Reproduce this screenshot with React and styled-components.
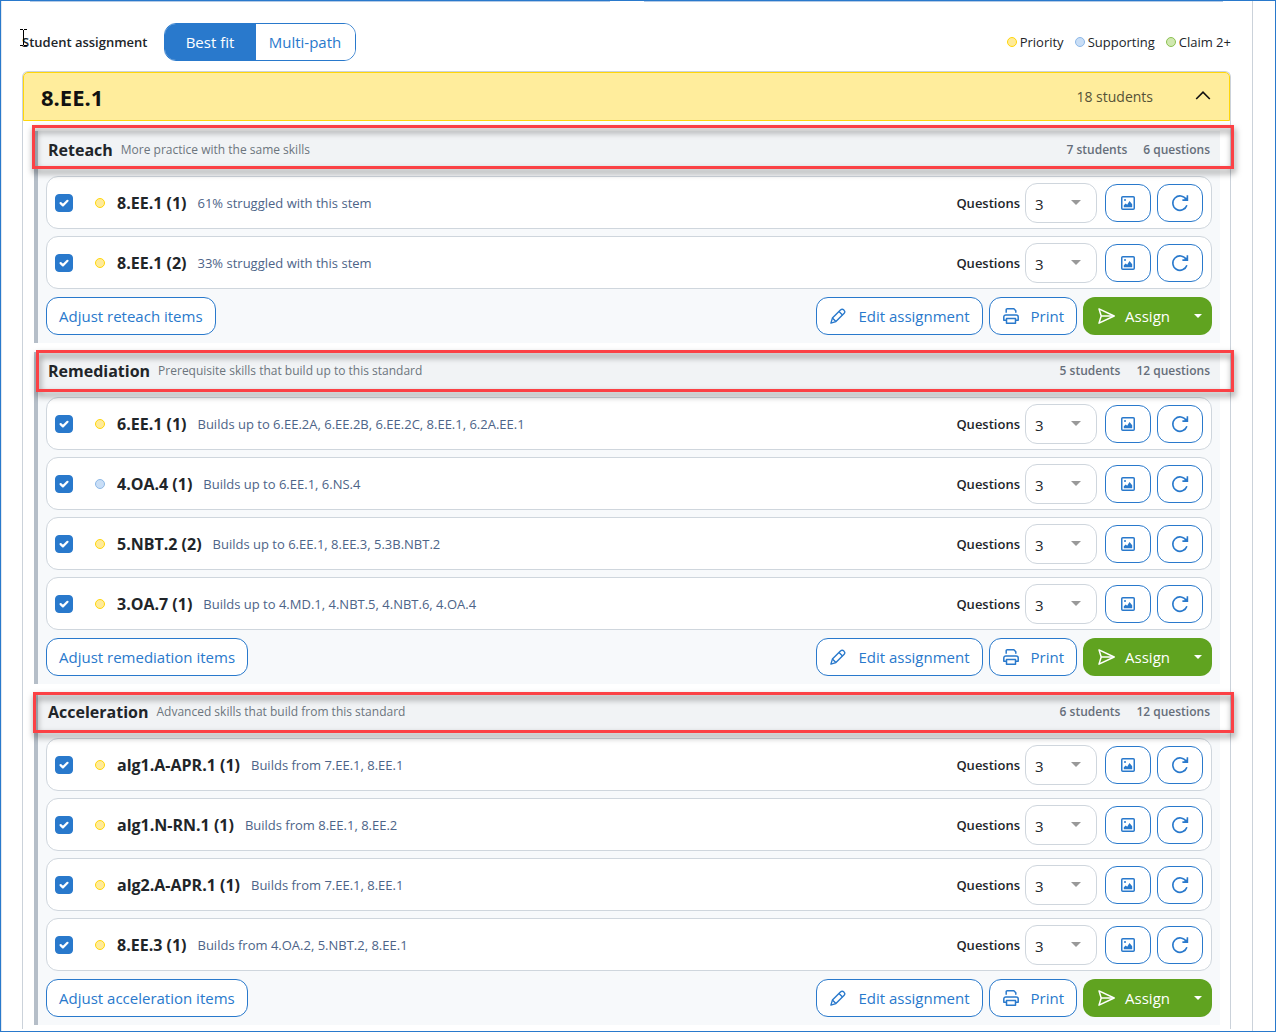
import React from 'react';
import styled, { createGlobalStyle } from 'styled-components';

const GlobalStyle = createGlobalStyle`
  *, *::before, *::after {
    box-sizing: border-box;
  }

  body {
    margin: 0;
    background: #ffffff;
    color: #212529;
    font-family: "Open Sans", "Noto Sans", sans-serif;
    font-size: 15px;
    line-height: 20px;
  }

  button, input, select {
    margin: 0;
    font: inherit;
  }
`

const Page = styled.div`
  display: flex;
  min-height: 100vh;
  border: 1px solid #2979cc;
`

const Panel = styled.main`
  flex: 1;
  display: flex;
  flex-direction: column;
  margin-right: 22px;
  padding: 0 21px 2px 20px;
  border-left: 1px solid #e3e8ee;
  border-right: 1px solid #cbd2da;
`

const PreviousCards = styled.div`
  display: grid;
  grid-template-columns: 1fr 1fr;
  gap: 34px;
  height: 1px;
  padding: 0 8px;
`

const CardEdge = styled.div`
  background: #b4cae6;
`

const Toolbar = styled.div`
  position: relative;
  display: flex;
  align-items: center;
  padding: 21px 0 10px;
`

const TextCursor = styled.svg`
  position: absolute;
  left: -2px;
  top: 27px;
`

const ToolbarLabel = styled.span`
  margin-right: 16px;
  font-size: 13px;
  font-weight: 600;
`

const Toggle = styled.div`
  display: flex;
  height: 38px;
  border: 1px solid #2979cc;
  border-radius: 12px;
  overflow: hidden;
`

const ToggleButton = styled.button`
  padding: 0 12px;
  min-width: ${props => props.$active ? '91px' : '99px'};
  border: 0;
  background: ${props => props.$active ? '#2979cc' : '#ffffff'};
  color: ${props => props.$active ? '#ffffff' : '#2979cc'};
`

const Legend = styled.div`
  display: flex;
  gap: 11px;
  margin-left: auto;
  font-size: 13px;
`

const LegendItem = styled.span`
  display: flex;
  align-items: center;
  gap: 3px;
`

const dotColors = {
  priority: ['#ffeb99', '#ffd60a'],
  supporting: ['#c9def6', '#8db8e8'],
  claim: ['#d0e8b0', '#8cc152'],
}

const Dot = styled.span`
  width: 10px;
  height: 10px;
  border: 1px solid ${props => dotColors[props.$kind][1]};
  border-radius: 50%;
  background: ${props => dotColors[props.$kind][0]};
`

const Standard = styled.section`
  flex: 1;
  border: 1px solid #cbd2da;
  border-bottom: 0;
  border-radius: 6px 6px 0 0;
`

const StandardHeader = styled.button`
  display: flex;
  align-items: center;
  width: 100%;
  height: 49px;
  padding: 0 18px 0 17px;
  border: 1px solid #ffd60a;
  border-radius: 5px 5px 0 0;
  background: #ffed9c;
  color: #111111;
  text-align: left;
`

const StandardTitle = styled.span`
  flex: 1;
  font-size: 22px;
  font-weight: 700;
`

const StandardCount = styled.span`
  margin-right: 42px;
  color: #555237;
  font-size: 14px;
`

const Sections = styled.div`
  display: flex;
  flex-direction: column;
  gap: 9px;
  padding: 10px 10px 0 11px;
`

const SectionBox = styled.section`
  padding-bottom: 8px;
  border-left: 4px solid #b5bec8;
  background: #f7f9fb;
`

const SectionHeader = styled.header`
  position: relative;
  display: flex;
  align-items: center;
  height: 38px;
  padding: 0 10px;
  background: #f1f3f5;
`

const SectionTitle = styled.h2`
  margin: 0 8px 0 0;
  font-size: 16px;
  font-weight: 700;
`

const SectionNote = styled.span`
  flex: 1;
  color: #6c757d;
  font-size: 12px;
`

const SectionCount = styled.span`
  margin-left: 16px;
  color: #666e7a;
  font-size: 12px;
  font-weight: 600;
`

const Highlight = styled.div`
  position: absolute;
  top: ${props => props.$top}px;
  right: -14px;
  bottom: ${props => props.$bottom}px;
  left: ${props => props.$left}px;
  border: 3px solid #fb4145;
  filter: drop-shadow(1px 4px 3px rgba(0, 0, 0, 0.5));
  pointer-events: none;
`

const StemList = styled.ul`
  display: flex;
  flex-direction: column;
  gap: 7px;
  margin: 0;
  padding: 7px 8px 8px;
  list-style: none;
`

const StemRow = styled.li`
  display: flex;
  align-items: center;
  height: 53px;
  padding: 0 8px;
  border: 1px solid #cfd6dd;
  border-radius: 12px;
  background: #ffffff;
`

const CheckWrap = styled.span`
  display: grid;
  place-items: center;
  margin-right: 22px;

  & > * {
    grid-area: 1 / 1;
  }

  svg {
    pointer-events: none;
  }
`

const CheckInput = styled.input`
  appearance: none;
  width: 18px;
  height: 18px;
  border: 1px solid #2979cc;
  border-radius: 4px;
  background: #ffffff;

  &:checked {
    background: #2979cc;
  }
`

const StemLabel = styled.label`
  margin: 0 11px 0 12px;
  font-size: 16px;
  font-weight: 700;
`

const StemNote = styled.span`
  flex: 1;
  color: #4d6488;
  font-size: 13px;
`

const QuestionsLabel = styled.label`
  margin-right: 5px;
  font-size: 13px;
  font-weight: 600;
`

const SelectWrap = styled.span`
  position: relative;
  margin-right: 8px;

  svg {
    position: absolute;
    top: 17px;
    right: 16px;
    pointer-events: none;
  }
`

const Select = styled.select`
  appearance: none;
  display: block;
  width: 72px;
  height: 40px;
  padding: 2px 9px 0;
  border: 1px solid #cfd6dd;
  border-radius: 12px;
  background: #ffffff;
  color: #212529;
`

const Button = styled.button`
  display: flex;
  align-items: center;
  justify-content: center;
  gap: 12px;
  height: 38px;
  padding: 0 12px;
  border: 1px solid #2979cc;
  border-radius: 12px;
  background: #ffffff;
  color: #2979cc;
`

const IconButton = styled(Button)`
  width: 46px;
  padding: 0;

  & + & {
    margin-left: 6px;
  }
`

const Actions = styled.div`
  display: flex;
  gap: 6px;
  padding: 0 8px;
`

const AdjustButton = styled(Button)`
  margin-right: auto;
`

const ActionButton = styled(Button)`
  padding: 0 12px 0 13px;
`

const AssignGroup = styled.div`
  display: flex;
  border-radius: 12px;
  background: #60a320;
  overflow: hidden;
`

const AssignButton = styled(Button)`
  gap: 10px;
  padding: 0 13px 0 14px;
  border-color: transparent;
  border-radius: 0;
  background: transparent;
  color: #ffffff;
`

const AssignMenuButton = styled(AssignButton)`
  padding: 0 9px;
`

const CheckIcon = () => (
  <svg width="18" height="18" viewBox="0 0 18 18" fill="none">
    <path d="M5.6 9.1l2.3 2.3 4.6-4.6" stroke="#fff" strokeWidth="2.2" strokeLinecap="round" strokeLinejoin="round" />
  </svg>
)

const ImageIcon = () => (
  <svg width="14" height="14" viewBox="0 0 14 14" fill="none">
    <rect x=".75" y=".75" width="12.5" height="12.5" rx="1" stroke="currentColor" strokeWidth="1.5" />
    <circle cx="4" cy="4" r="1" fill="currentColor" />
    <path d="M2.8 11.2V9.2l1.9-1.8 1.5 1.3 2.3-3.6 2.7 3.2v2.9z" fill="currentColor" />
  </svg>
)

const RefreshIcon = () => (
  <svg width="18" height="18" viewBox="0 0 18 18" fill="none" stroke="currentColor" strokeWidth="1.6">
    <path d="M15.9 11.3A7.2 7.2 0 1 1 15.2 5.4" />
    <path d="M16.4 1.2v4.9h-5" />
    <path d="M16.4 2.8v3.3h-3.3z" fill="currentColor" stroke="none" />
  </svg>
)

const PencilIcon = () => (
  <svg width="16" height="16" viewBox="0 0 16 16" fill="none" stroke="currentColor" strokeWidth="1.4" strokeLinejoin="round">
    <path d="M.9 15.1l1.5-5L10.7 1.8a2 2 0 0 1 2.9 0l.6.6a2 2 0 0 1 0 2.9L5.9 13.6z" />
    <path d="M9 3.5L12.5 7M2.4 10.1l3.5 3.5" />
  </svg>
)

const PrinterIcon = () => (
  <svg width="16" height="16" viewBox="0 0 16 16" fill="none" stroke="currentColor" strokeWidth="1.5" strokeLinejoin="round">
    <path d="M3.2 4.8V1.8a1 1 0 0 1 1-1h6.7l1.9 1.9v2.1" />
    <path d="M3.3 12.2H.8V9a2 2 0 0 1 2-2h10.4a2 2 0 0 1 2 2v3.2h-2.5" />
    <path d="M3.5 10.4h9v4.8h-9z" />
  </svg>
)

const SendIcon = () => (
  <svg width="17" height="16" viewBox="0 0 17 16" fill="none" stroke="currentColor" strokeWidth="1.5" strokeLinejoin="round">
    <path d="M1 .9L16.2 8 1 15.1 3.2 8z" />
    <path d="M3.2 8h12" />
  </svg>
)

const Caret = ({ width = 8, color = 'currentColor' }) => (
  <svg width={width} height={width / 2} viewBox="0 0 10 5">
    <path d="M0 0h10L5 5z" fill={color} />
  </svg>
)

const ChevronUp = () => (
  <svg width="16" height="14" viewBox="0 0 16 14" fill="none">
    <path d="M1.2 9L8 2.2 14.8 9" stroke="#111" strokeWidth="1.6" />
  </svg>
)

const sections = [
  {
    name: 'Reteach',
    note: 'More practice with the same skills',
    students: 7,
    questions: 6,
    highlight: { $top: -6, $bottom: 0, $left: -6 },
    stems: [
      { name: '8.EE.1 (1)', note: '61% struggled with this stem' },
      { name: '8.EE.1 (2)', note: '33% struggled with this stem' },
    ],
  },
  {
    name: 'Remediation',
    note: 'Prerequisite skills that build up to this standard',
    students: 5,
    questions: 12,
    highlight: { $top: -2, $bottom: -2, $left: -2 },
    stems: [
      { name: '6.EE.1 (1)', note: 'Builds up to 6.EE.2A, 6.EE.2B, 6.EE.2C, 8.EE.1, 6.2A.EE.1' },
      { name: '4.OA.4 (1)', note: 'Builds up to 6.EE.1, 6.NS.4', kind: 'supporting' },
      { name: '5.NBT.2 (2)', note: 'Builds up to 6.EE.1, 8.EE.3, 5.3B.NBT.2' },
      { name: '3.OA.7 (1)', note: 'Builds up to 4.MD.1, 4.NBT.5, 4.NBT.6, 4.OA.4' },
    ],
  },
  {
    name: 'Acceleration',
    note: 'Advanced skills that build from this standard',
    students: 6,
    questions: 12,
    highlight: { $top: -1, $bottom: -2, $left: -5 },
    stems: [
      { name: 'alg1.A-APR.1 (1)', note: 'Builds from 7.EE.1, 8.EE.1' },
      { name: 'alg1.N-RN.1 (1)', note: 'Builds from 8.EE.1, 8.EE.2' },
      { name: 'alg2.A-APR.1 (1)', note: 'Builds from 7.EE.1, 8.EE.1' },
      { name: '8.EE.3 (1)', note: 'Builds from 4.OA.2, 5.NBT.2, 8.EE.1' },
    ],
  },
]

const Stem = ({ id, name, note, kind = 'priority' }) => (
  <StemRow>
    <CheckWrap>
      <CheckInput type="checkbox" id={id} defaultChecked />
      <CheckIcon />
    </CheckWrap>
    <Dot $kind={kind} />
    <StemLabel htmlFor={id}>{name}</StemLabel>
    <StemNote>{note}</StemNote>
    <QuestionsLabel htmlFor={`${id}-questions`}>Questions</QuestionsLabel>
    <SelectWrap>
      <Select id={`${id}-questions`} defaultValue="3">
        {[1, 2, 3, 4, 5].map(n => <option key={n}>{n}</option>)}
      </Select>
      <Caret width={10} color="#999" />
    </SelectWrap>
    <IconButton type="button" aria-label="Preview"><ImageIcon /></IconButton>
    <IconButton type="button" aria-label="Refresh"><RefreshIcon /></IconButton>
  </StemRow>
)

const Section = ({ name, note, students, questions, highlight, stems }) => (
  <SectionBox>
    <SectionHeader>
      <SectionTitle>{name}</SectionTitle>
      <SectionNote>{note}</SectionNote>
      <SectionCount>{students} students</SectionCount>
      <SectionCount>{questions} questions</SectionCount>
      <Highlight {...highlight} />
    </SectionHeader>
    <StemList>
      {stems.map((stem, i) => <Stem key={stem.name} id={`${name.toLowerCase()}-${i}`} {...stem} />)}
    </StemList>
    <Actions>
      <AdjustButton type="button">Adjust {name.toLowerCase()} items</AdjustButton>
      <ActionButton type="button"><PencilIcon />Edit assignment</ActionButton>
      <ActionButton type="button"><PrinterIcon />Print</ActionButton>
      <AssignGroup>
        <AssignButton type="button"><SendIcon />Assign</AssignButton>
        <AssignMenuButton type="button" aria-label="More assign options"><Caret /></AssignMenuButton>
      </AssignGroup>
    </Actions>
  </SectionBox>
)

class App extends React.Component {
  render() {
    return (
      <Page>
        <GlobalStyle />
        <Panel>
          <PreviousCards>
            <CardEdge />
            <CardEdge />
          </PreviousCards>
          <Toolbar>
            <ToolbarLabel>Student assignment</ToolbarLabel>
            <Toggle>
              <ToggleButton type="button" $active>Best fit</ToggleButton>
              <ToggleButton type="button">Multi-path</ToggleButton>
            </Toggle>
            <Legend>
              <LegendItem><Dot $kind="priority" />Priority</LegendItem>
              <LegendItem><Dot $kind="supporting" />Supporting</LegendItem>
              <LegendItem><Dot $kind="claim" />Claim 2+</LegendItem>
            </Legend>
            <TextCursor width="8" height="17" viewBox="0 0 8 17" fill="none" stroke="#000">
              <path d="M0 .5h3M4 .5h3M3.5 1v15M0 16.5h3M4 16.5h3" />
            </TextCursor>
          </Toolbar>
          <Standard>
            <StandardHeader type="button" aria-expanded="true">
              <StandardTitle>8.EE.1</StandardTitle>
              <StandardCount>18 students</StandardCount>
              <ChevronUp />
            </StandardHeader>
            <Sections>
              {sections.map(section => <Section key={section.name} {...section} />)}
            </Sections>
          </Standard>
        </Panel>
      </Page>
    );
  }
}

export default App
